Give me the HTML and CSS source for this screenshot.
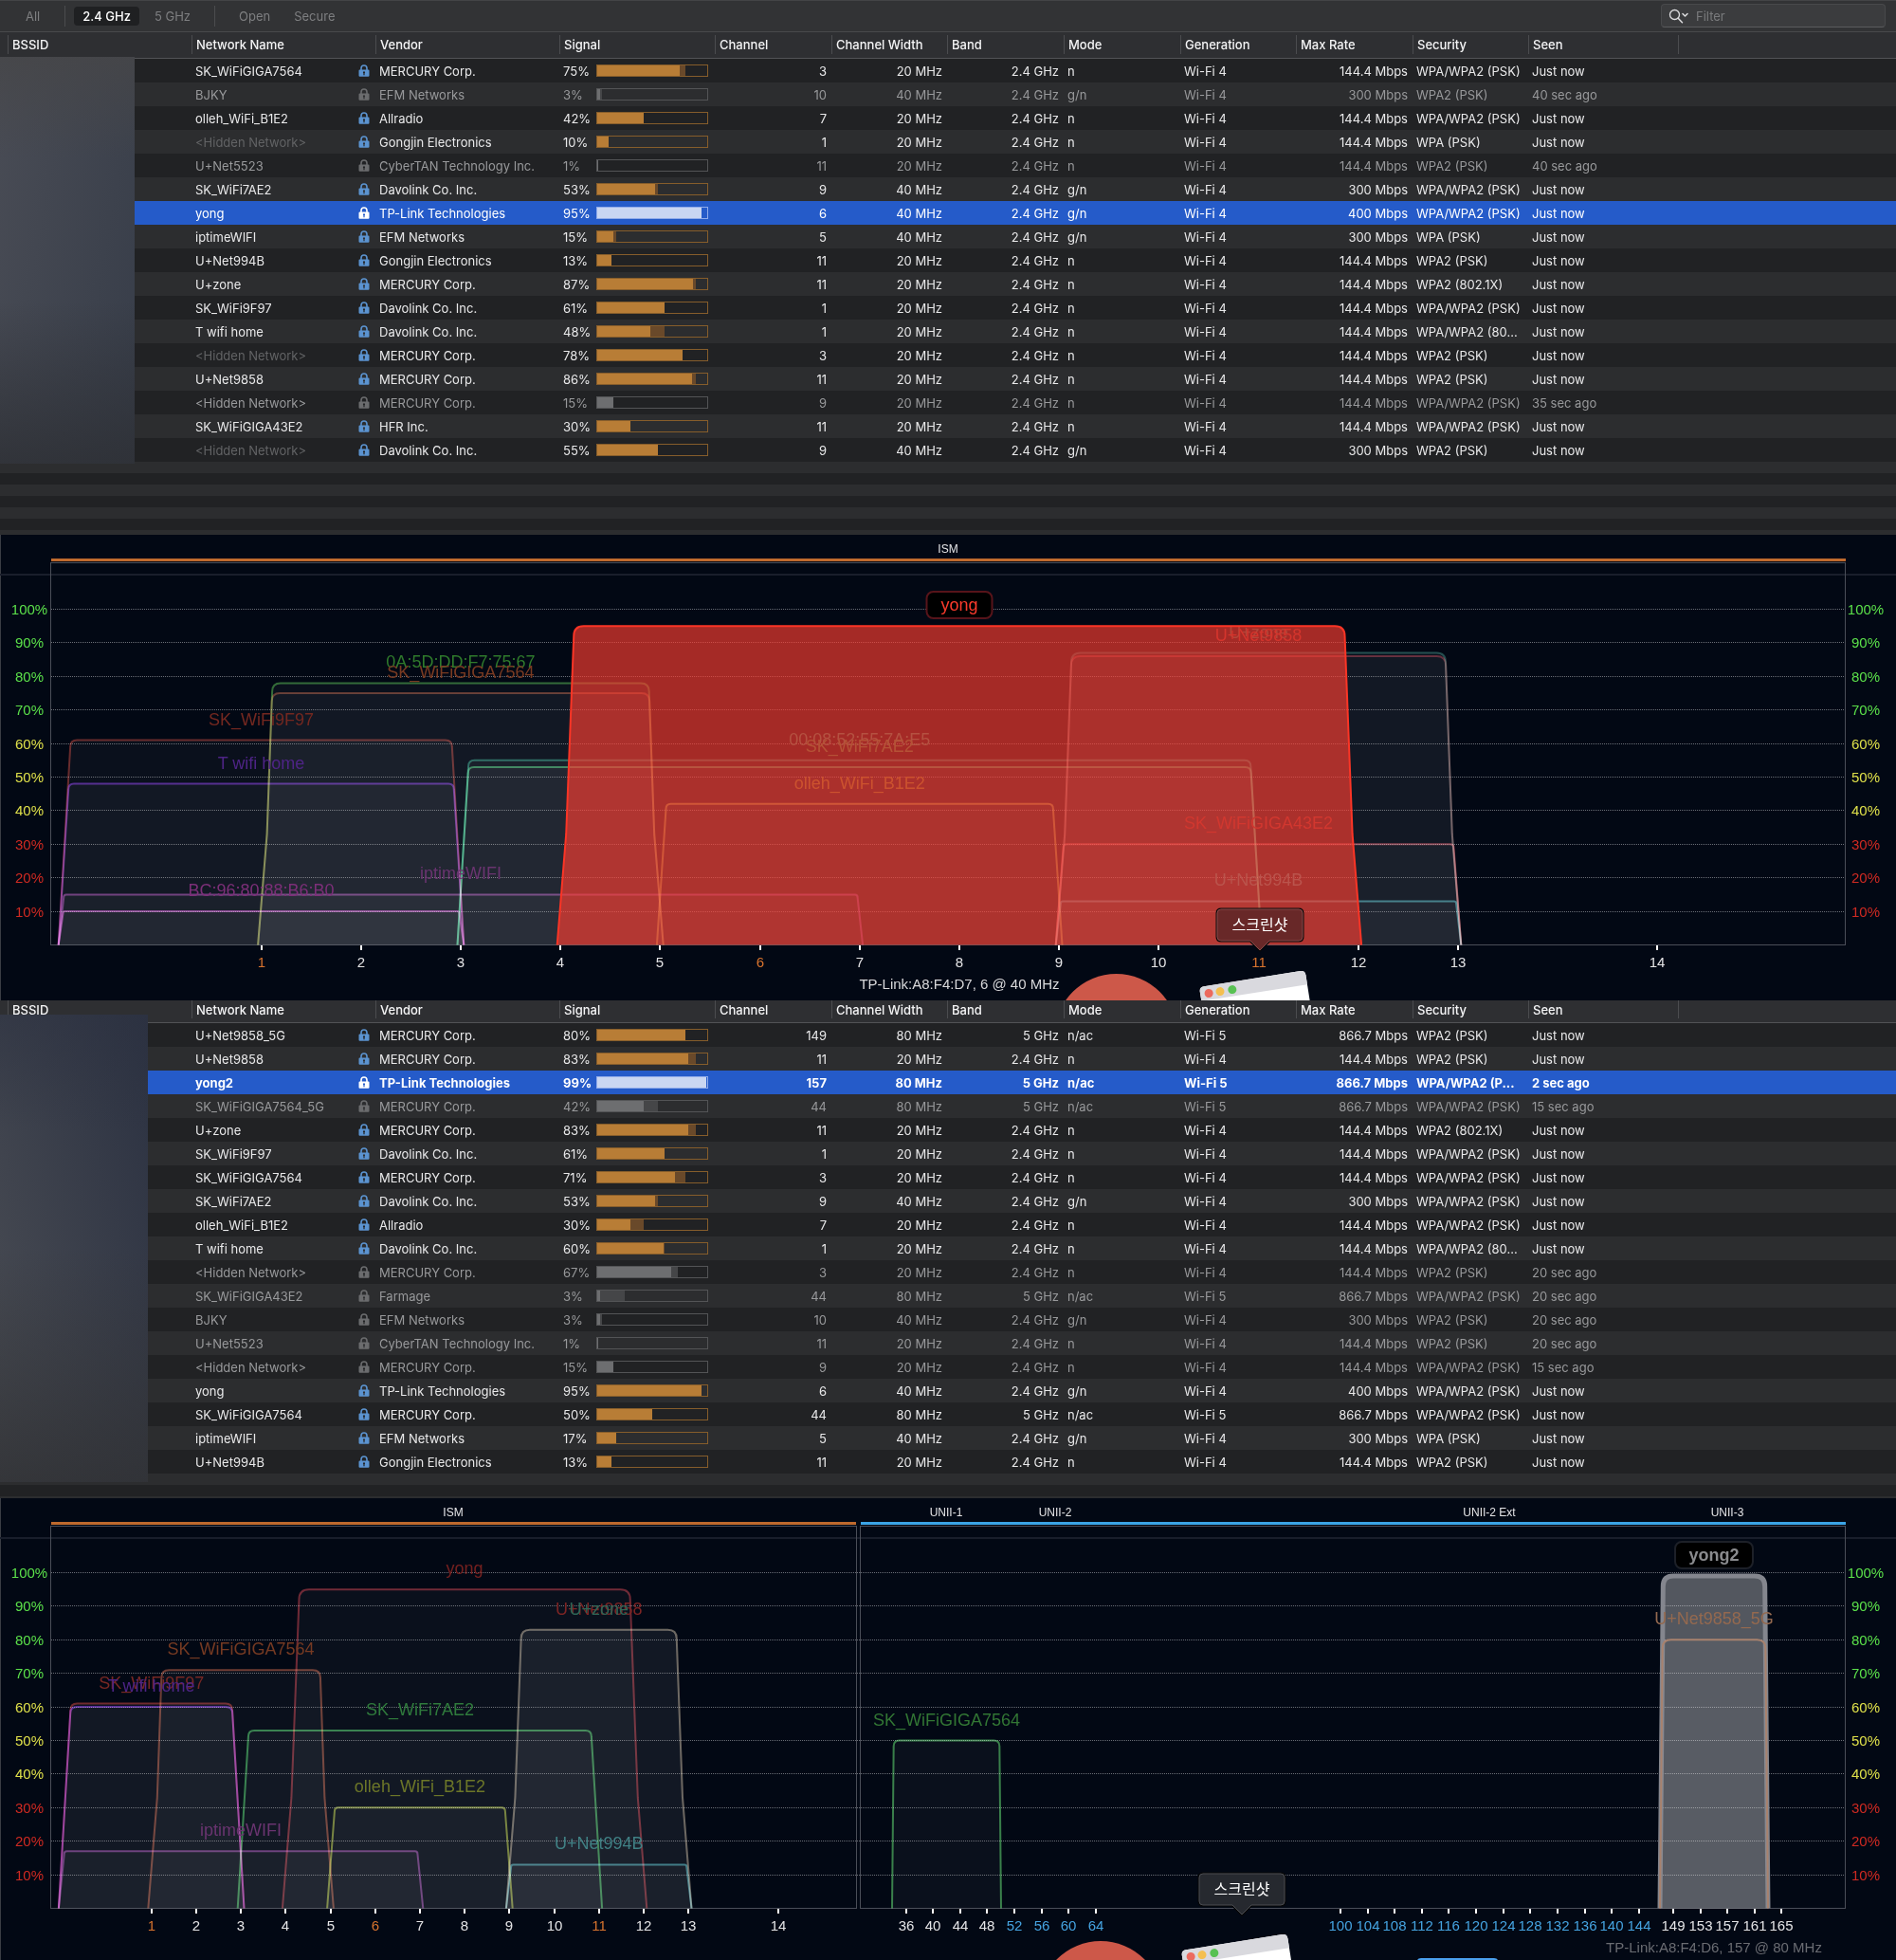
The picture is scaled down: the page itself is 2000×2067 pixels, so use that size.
FILE: index.html
```html
<!DOCTYPE html>
<html lang="en">
<head>
<meta charset="utf-8">
<title>Wi-Fi networks</title>
<link rel="stylesheet" href="styles.css">
</head>
<body>
<svg class="defs" aria-hidden="true">
  <symbol id="lock" viewBox="0 0 12 13">
    <path d="M3 6V4a3 3 0 0 1 6 0v2" fill="none" stroke="currentColor" stroke-width="1.6"/>
    <path fill="currentColor" fill-rule="evenodd" d="M1.5 5.6h9a1 1 0 0 1 1 1v5.2a1 1 0 0 1-1 1h-9a1 1 0 0 1-1-1V6.600a1 1 0 0 1 1-1zM6 7.200a1.100 1.100 0 0 0-.6 2v2h1.200v-2a1.100 1.100 0 0 0-.6-2z"/>
  </symbol>
</svg>

<header class="toolbar">
  <nav class="filters" aria-label="Network filters">
    <button type="button" class="filter">All</button>
    <span class="divider"></span>
    <button type="button" class="filter filter-on" aria-pressed="true">2.4 GHz</button>
    <button type="button" class="filter">5 GHz</button>
    <span class="divider divider-wide"></span>
    <button type="button" class="filter">Open</button>
    <button type="button" class="filter">Secure</button>
  </nav>
  <label class="search">
    <svg class="search-icon" viewBox="0 0 22 16" width="22" height="16" aria-hidden="true">
      <circle cx="6.500" cy="6.500" r="5" fill="none" stroke="#dcdcde" stroke-width="1.300"/>
      <path d="M10.200 10.200l4.300 4.500" stroke="#dcdcde" stroke-width="1.500" stroke-linecap="round"/>
      <path d="M15 5.500l2.500 2.500 2.500-2.500" fill="none" stroke="#dcdcde" stroke-width="1.500" stroke-linecap="round" stroke-linejoin="round"/>
    </svg>
    <input class="search-input" type="search" placeholder="Filter" aria-label="Filter">
  </label>
</header>

<main>
  <section class="list">
    <table class="networks" id="networks-a"></table>
    <div class="mask mask-a"></div>
    <div class="filler filler-a"></div>
  </section>
  <section class="spectrum">
    <svg class="chart" id="chart-a" viewBox="0 0 2000 491" role="img" aria-label="2.4 GHz channels"></svg>
  </section>
  <section class="list">
    <table class="networks networks-scrolled" id="networks-b"></table>
    <div class="mask mask-b"></div>
    <div class="filler filler-b"></div>
  </section>
  <section class="spectrum">
    <svg class="chart" id="chart-b" viewBox="0 0 2000 487" role="img" aria-label="2.4 GHz and 5 GHz channels"></svg>
  </section>
</main>
<script src="app.js"></script>
</body>
</html>
```
FILE: styles.css
```css
* { box-sizing: border-box; }

body {
  margin: 0;
  background: #020814;
  color: #e9e9ea;
  font-family: Inter, "Liberation Sans", "Noto Sans CJK KR", sans-serif;
  font-size: 13px;
  line-height: 18px;
}

.defs { display: none; }

/* toolbar */
.toolbar {
  display: flex;
  justify-content: space-between;
  align-items: center;
  height: 34px;
  padding: 0 11px 1px 18px;
  background: #323335;
  border-top: 1px solid #434446;
  border-bottom: 1px solid #48494b;
}
.filters { display: flex; align-items: center; gap: 7px; }
.filter {
  height: 20px;
  padding: 0 9px;
  border: 0;
  border-radius: 4px;
  background: none;
  color: #7e7f81;
  font: inherit;
}
.filter-on { background: #1f2022; color: #fff; font-weight: 500; }
.divider { width: 1px; height: 22px; margin: 0 2px 0 10px; background: #4b4c4e; }
.divider-wide { margin: 0 9px; }

.search {
  display: flex;
  align-items: center;
  gap: 7px;
  width: 237px;
  height: 25px;
  padding-left: 7px;
  border: 1px solid #48494b;
  border-bottom-color: #5a5b5d;
  border-radius: 4px;
  background: #3b3c3e;
}
.search-input {
  flex: 1;
  min-width: 0;
  padding: 0;
  border: 0;
  outline: 0;
  background: none;
  color: #e9e9ea;
  font: inherit;
}
.search-input::placeholder { color: #7a7b7d; }

/* network list */
.list { position: relative; overflow: hidden; }
.networks {
  width: 100%;
  table-layout: fixed;
  border-collapse: separate;
  border-spacing: 0;
}
.c-name, .c-vendor { width: 194px; }
.c-bssid { width: 202px; }
.c-signal { width: 164px; }
.c-mid { width: 123px; }
.c-slim { width: 122px; }
.c-seen { width: 158px; }

.networks th {
  padding: 3px 0 4px;
  background: #2e2f32;
  border-bottom: 1px solid #525356;
  color: #f4f4f5;
  font-weight: 500;
  text-align: left;
}
.networks-scrolled th { padding: 0 0 4px; }
.head {
  display: flex;
  align-items: center;
  height: 20px;
  padding-left: 4px;
  border-left: 1px solid #4b4c4f;
}
.networks-scrolled .head { height: 19px; }
.networks th:first-child .head { margin-left: 8px; }

.networks td {
  height: 25px;
  padding: 0 5px 0 4px;
  white-space: nowrap;
  overflow: hidden;
}
.networks tr { background: #212224; }
.networks tr:nth-child(even) { background: #2c2d2f; }
.networks .num { text-align: right; }

.networks .gone { color: #98999b; }
.networks tbody tr.picked { background: #255bc9; color: #fff; }
.strong { font-weight: 700; }
.anonymous { color: #626365; }
.gone .anonymous { color: inherit; }

.name { display: flex; align-items: center; justify-content: space-between; }
.lock { width: 12px; height: 13px; margin-right: 1px; color: #5b93d0; }
.gone .lock { color: #6b6c6e; }
.picked .lock { color: #fff; }

.signal { display: flex; align-items: center; }
.level { width: 35px; flex: none; }
.bar {
  display: flex;
  width: 118px;
  height: 13px;
  flex: none;
  border: 1px solid #865d2b;
}
.bar-now { background: #b87d36; }
.bar-peak { background: #69492a; }
.gone .bar { border-color: #535456; }
.gone .bar-now { background: #6d6e70; }
.gone .bar-peak { background: #454648; }
.picked .bar { border-color: #8fabea; }
.picked .bar-now { background: #c9d6f2; }

.filler {
  background: repeating-linear-gradient(#2c2d2f 0 12px, #212224 12px 24px);
}
.filler-a { height: 77px; }
.filler-b { height: 26px; }

/* blurred-out addresses */
.mask { position: absolute; left: 0; }
.mask-a {
  top: 26px;
  bottom: 75px;
  width: 142px;
  background:
    linear-gradient(to bottom, rgba(70, 70, 72, .8), rgba(70, 70, 72, 0) 25%, rgba(45, 47, 52, 0) 60%, rgba(45, 47, 52, .8)),
    linear-gradient(100deg, #494c55, #373d49);
}
.mask-b {
  top: 15px;
  bottom: 17px;
  width: 156px;
  background:
    linear-gradient(to bottom, rgba(44, 49, 64, .5), rgba(44, 49, 64, 0) 25%, rgba(47, 48, 51, 0) 50%, rgba(47, 48, 51, .8)),
    linear-gradient(75deg, #4a4d54, #2c3242);
}

/* spectrum */
.spectrum { background: #020814; }
.chart {
  display: block;
  width: 100%;
  font-family: "Liberation Sans", "Noto Sans CJK KR", sans-serif;
  overflow: hidden;
}
.chart text { text-anchor: middle; }
.frame { fill: none; stroke: #4a4e58; }
.edge { stroke: #3a3d44; }
.rule { stroke: #191e2b; }
.grid { stroke: #6a6e76; stroke-dasharray: 1 1; }
.tick { stroke: #fff; stroke-width: 2; }
.band { font-size: 12px; fill: #e4e4e6; }
.axis { font-size: 15px; fill: #e4e4e6; }
.hi { fill: #5be04a; }
.mid { fill: #dfe04a; }
.low { fill: #d02a22; }
.main { fill: #d8742e; }
.dfs { fill: #45a3e0; }
.ism { fill: #bf6a2e; }
.unii { fill: #3ba4e6; }
.ssid { font-size: 18px; }
.net { stroke-width: 2; mix-blend-mode: screen; }
.area { fill: #fff; fill-opacity: .035; }
.caption { font-size: 15px; fill: #d8d8da; }
.caption-dim { fill: #6a6c72; }
.tip { font-size: 16px; fill: #fff; }
.heavy { font-weight: 700; }
```
FILE: app.js
```js
const COLUMNS = [
  ['BSSID', 'c-bssid'], ['Network Name', 'c-name'], ['Vendor', 'c-vendor'], ['Signal', 'c-signal'],
  ['Channel', 'c-mid'], ['Channel Width', 'c-slim'], ['Band', 'c-mid'], ['Mode', 'c-mid'],
  ['Generation', 'c-slim'], ['Max Rate', 'c-mid'], ['Security', 'c-slim'], ['Seen', 'c-seen'], ['', '']
];

// name | vendor | signal | peak | channel | width | mode | rate | security | seen | state
const LIST_A = `
SK_WiFiGIGA7564|MERCURY Corp.|75|80|3|20|n|144.4|WPA/WPA2 (PSK)|Just now
BJKY|EFM Networks|3|4|10|40|g/n|300|WPA2 (PSK)|40 sec ago|gone
olleh_WiFi_B1E2|Allradio|42|42|7|20|n|144.4|WPA/WPA2 (PSK)|Just now
<Hidden Network>|Gongjin Electronics|10|10|1|20|n|144.4|WPA (PSK)|Just now
U+Net5523|CyberTAN Technology Inc.|1|1|11|20|n|144.4|WPA2 (PSK)|40 sec ago|gone
SK_WiFi7AE2|Davolink Co. Inc.|53|55|9|40|g/n|300|WPA/WPA2 (PSK)|Just now
yong|TP-Link Technologies|95|95|6|40|g/n|400|WPA/WPA2 (PSK)|Just now|picked
iptimeWIFI|EFM Networks|15|17|5|40|g/n|300|WPA (PSK)|Just now
U+Net994B|Gongjin Electronics|13|13|11|20|n|144.4|WPA2 (PSK)|Just now
U+zone|MERCURY Corp.|87|90|11|20|n|144.4|WPA2 (802.1X)|Just now
SK_WiFi9F97|Davolink Co. Inc.|61|61|1|20|n|144.4|WPA/WPA2 (PSK)|Just now
T wifi home|Davolink Co. Inc.|48|61|1|20|n|144.4|WPA/WPA2 (80...|Just now
<Hidden Network>|MERCURY Corp.|78|78|3|20|n|144.4|WPA2 (PSK)|Just now
U+Net9858|MERCURY Corp.|86|90|11|20|n|144.4|WPA2 (PSK)|Just now
<Hidden Network>|MERCURY Corp.|15|15|9|20|n|144.4|WPA/WPA2 (PSK)|35 sec ago|gone
SK_WiFiGIGA43E2|HFR Inc.|30|30|11|20|n|144.4|WPA/WPA2 (PSK)|Just now
<Hidden Network>|Davolink Co. Inc.|55|55|9|40|g/n|300|WPA2 (PSK)|Just now`;

const LIST_B = `
U+Net9858_5G|MERCURY Corp.|80|80|149|80|n/ac|866.7|WPA2 (PSK)|Just now
U+Net9858|MERCURY Corp.|83|90|11|20|n|144.4|WPA2 (PSK)|Just now
yong2|TP-Link Technologies|99|99|157|80|n/ac|866.7|WPA/WPA2 (P...|2 sec ago|picked strong
SK_WiFiGIGA7564_5G|MERCURY Corp.|42|55|44|80|n/ac|866.7|WPA/WPA2 (PSK)|15 sec ago|gone
U+zone|MERCURY Corp.|83|90|11|20|n|144.4|WPA2 (802.1X)|Just now
SK_WiFi9F97|Davolink Co. Inc.|61|61|1|20|n|144.4|WPA/WPA2 (PSK)|Just now
SK_WiFiGIGA7564|MERCURY Corp.|71|80|3|20|n|144.4|WPA/WPA2 (PSK)|Just now
SK_WiFi7AE2|Davolink Co. Inc.|53|55|9|40|g/n|300|WPA/WPA2 (PSK)|Just now
olleh_WiFi_B1E2|Allradio|30|42|7|20|n|144.4|WPA/WPA2 (PSK)|Just now
T wifi home|Davolink Co. Inc.|60|61|1|20|n|144.4|WPA/WPA2 (80...|Just now
<Hidden Network>|MERCURY Corp.|67|73|3|20|n|144.4|WPA2 (PSK)|20 sec ago|gone
SK_WiFiGIGA43E2|Farmage|3|25|44|80|n/ac|866.7|WPA/WPA2 (PSK)|20 sec ago|gone
BJKY|EFM Networks|3|4|10|40|g/n|300|WPA2 (PSK)|20 sec ago|gone
U+Net5523|CyberTAN Technology Inc.|1|1|11|20|n|144.4|WPA2 (PSK)|20 sec ago|gone
<Hidden Network>|MERCURY Corp.|15|15|9|20|n|144.4|WPA/WPA2 (PSK)|15 sec ago|gone
yong|TP-Link Technologies|95|95|6|40|g/n|400|WPA/WPA2 (PSK)|Just now
SK_WiFiGIGA7564|MERCURY Corp.|50|50|44|80|n/ac|866.7|WPA/WPA2 (PSK)|Just now
iptimeWIFI|EFM Networks|17|17|5|40|g/n|300|WPA (PSK)|Just now
U+Net994B|Gongjin Electronics|13|13|11|20|n|144.4|WPA2 (PSK)|Just now`;

const esc = s => s.replace(/</g, '&lt;').replace(/>/g, '&gt;');

function row(line) {
  const [name, vendor, now, peak, channel, width, mode, rate, security, seen, state = ''] = line.split('|');
  const five = mode === 'n/ac';
  const hidden = name[0] === '<' ? ' class="anonymous"' : '';
  return `<tr class="${state}"><td></td>
    <td><div class="name"><span${hidden}>${esc(name)}</span><svg class="lock" aria-label="Secured"><use href="#lock"/></svg></div></td>
    <td>${vendor}</td>
    <td><div class="signal"><span class="level">${now}%</span><div class="bar"><div class="bar-now" style="width:${now}%"></div><div class="bar-peak" style="width:${peak - now}%"></div></div></div></td>
    <td class="num">${channel}</td><td class="num">${width} MHz</td><td class="num">${five ? '5' : '2.4'} GHz</td>
    <td>${mode}</td><td>Wi-Fi ${five ? 5 : 4}</td><td class="num">${rate} Mbps</td>
    <td>${security}</td><td>${seen}</td><td></td></tr>`;
}

function fillTable(id, list) {
  document.getElementById(id).innerHTML =
    `<colgroup>${COLUMNS.map(c => `<col class="${c[1]}">`).join('')}</colgroup>
     <thead><tr>${COLUMNS.map(c => `<th scope="col"><div class="head">${c[0]}</div></th>`).join('')}</tr></thead>
     <tbody>${list.trim().split('\n').map(row).join('')}</tbody>`;
}

const BASE = 432.5;
const UNIT = 3.54;
const text = (x, y, cls, s, fill) => `<text x="${x}" y="${y}" class="${cls}"${fill ? ` fill="${fill}"` : ''}>${s}</text>`;

// outline of one transmission: steep flanks with a knee, rounded shoulders
function outline(cx, half, level, steep) {
  const top = BASE - UNIT * level;
  const dx = steep ? level / 30 : 3.3 + .15 * level;
  const r = level / 10 + 1;
  const l = cx - half, e = cx + half;
  const knee = !steep && level > 65 ? BASE - UNIT * 33 : 0;
  return `M${l} ${BASE}` + (knee ? `L${l + 9.5} ${knee}` : '') +
    `L${l + dx} ${top + r}Q${l + dx} ${top} ${l + dx + r} ${top}H${e - dx - r}` +
    `Q${e - dx} ${top} ${e - dx} ${top + r}` + (knee ? `L${e - 9.5} ${knee}` : '') + `L${e} ${BASE}`;
}

function net(n) {
  const d = outline(n.x, n.half, n.level, n.steep);
  return `<path class="area" d="${d}"/><path class="net" d="${d}" fill="none" stroke="${n.line}"/>` +
    text(n.x, BASE - UNIT * n.level - 16, 'ssid', n.name, n.label);
}

function scaffold() {
  let s = '<line class="edge" x1=".5" x2=".5" y1="0" y2="491"/><line class="rule" x1="0" x2="2000" y1="42" y2="42" stroke-width="2"/>';
  for (let p = 10; p <= 100; p += 10) {
    const y = Math.floor(BASE - UNIT * p) + .5;
    const cls = 'axis ' + (p > 60 ? 'hi' : p > 30 ? 'mid' : 'low');
    s += `<line class="grid" x1="54" x2="1946" y1="${y}" y2="${y}"/>` + text(31, y + 5, cls, p + '%') + text(1968, y + 5, cls, p + '%');
  }
  return s;
}

const tick = (x, label, cls = '') =>
  `<line class="tick" x1="${x}" x2="${x}" y1="433" y2="438"/>` + text(x, 456, 'axis ' + cls, label);

function ismTicks(pos) {
  let s = '';
  for (let c = 1; c <= 14; c++) s += tick(Math.round(pos(c)), c, c % 5 === 1 ? 'main' : '');
  return s;
}

function badge(x, y, w, stroke, fill, cls, name) {
  return `<rect x="${x - w / 2}" y="${y}" width="${w}" height="28" rx="7" fill="#000" stroke="${stroke}" stroke-width="2"/>` +
    text(x, y + 20, cls, name, fill);
}

function tooltip(x, y, fill, edge) {
  return `<path d="M${x - 41} ${y}h82q4 0 4 4v25q0 4-4 4h-31l-10 10-10-10h-31q-4 0-4-4v-25q0-4 4-4z" fill="${fill}" stroke="#080808" stroke-width="3"/>
    <path d="M${x - 41} ${y}h82q4 0 4 4v25q0 4-4 4h-31l-10 10-10-10h-31q-4 0-4-4v-25q0-4 4-4z" fill="${fill}" stroke="${edge}"/>` +
    text(x, y + 22, 'tip', '스크린샷');
}

function dock(cx, cy, wx, wy) {
  return `<circle cx="${cx}" cy="${cy}" r="65" fill="#cd5849"/>
    <g transform="translate(${wx} ${wy}) rotate(-9)">
      <path d="M0 60V5q0-5 5-5h103q5 0 5 5v55z" fill="#fff"/>
      <path d="M0 15V5q0-5 5-5h103q5 0 5 5v10z" fill="#d9d9de"/>
      <circle cx="9" cy="8" r="4.500" fill="#ec6a5e"/><circle cx="21" cy="8" r="4.500" fill="#f4bf4f"/><circle cx="34" cy="8" r="4.500" fill="#58c152"/>
    </g>`;
}

function chartA() {
  const pos = c => c === 14 ? 1748 : 275.5 + 105.2 * (c - 1);
  const n = (name, ch, level, line, label, wide) =>
    net({ name, x: pos(ch), level, line, label, half: (wide ? 4 : 2) * 105.2 + 3.4 });
  const yong = outline(pos(8), 4 * 105.2 + 3.4, 95);
  return scaffold() +
    '<rect class="ism" x="54" y="25" width="1893" height="3"/>' + text(1000, 19, 'band', 'ISM') +
    '<rect class="frame" x="53.500" y="29.500" width="1893" height="403"/>' +
    n('U+zone', 11, 87, '#20463e', '#2a5c4c') + n('U+Net9858', 11, 86, '#5c1e22', '#8c2424') +
    n('0A:5D:DD:F7:75:67', 3, 78, '#2f6424', '#2f7a2c') + n('SK_WiFiGIGA7564', 3, 75, '#5e2e1a', '#7a3b22') +
    n('SK_WiFi9F97', 1, 61, '#642218', '#742820') + n('00:08:52:55:7A:E5', 7, 55, '#1e5c4a', '#2f7a60', 1) +
    n('SK_WiFi7AE2', 7, 53, '#2a7440', '#2f7d40', 1) + n('T wifi home', 1, 48, '#4c1e80', '#4e2486') +
    n('olleh_WiFi_B1E2', 7, 42, '#747a26', '#747c2a') + n('SK_WiFiGIGA43E2', 11, 30, '#7a2c30', '#842c2c') +
    n('iptimeWIFI', 3, 15, '#642c68', '#6a3470', 1) + n('U+Net994B', 11, 13, '#2f6c70', '#3f8080') +
    n('BC:96:80:88:B6:B0', 1, 10, '#7c2f7c', '#7c2f78') +
    `<path d="${yong}" fill="#fa3c30" fill-opacity=".66" stroke="#fb3526" stroke-width="2"/>` +
    badge(1012, 60, 69, '#57141a', '#fb3b2c', 'ssid', 'yong') +
    ismTicks(pos) + tooltip(1329, 395, '#682828', '#8a4a4a') +
    text(1012, 479, 'caption', 'TP-Link:A8:F4:D7, 6 @ 40 MHz') + dock(1177.5, 528, 1265, 477);
}

function chartB() {
  const pos = c => c === 14 ? 820.5 : 159.7 + 47.2 * (c - 1);
  const n = (name, ch, level, line, label, wide) =>
    net({ name, x: pos(ch), level, line, label, half: (wide ? 4 : 2) * 47.2 + 3.4 });
  const yong2 = outline(1808, 57, 99, true);
  let ticks = ismTicks(pos);
  for (let i = 0; i < 8; i++) ticks += tick(Math.round(955.5 + 28.65 * i), 36 + 4 * i, i > 3 ? 'dfs' : '');
  for (let i = 0; i < 12; i++) ticks += tick(Math.round(1414 + 28.62 * i), 100 + 4 * i, 'dfs');
  for (let i = 0; i < 5; i++) ticks += tick(Math.round(1765 + 28.6 * i), 149 + 4 * i);
  return scaffold() +
    '<rect class="ism" x="54" y="25" width="849" height="3"/><rect class="unii" x="908" y="25" width="1039" height="3"/>' +
    text(478, 19, 'band', 'ISM') + text(998, 19, 'band', 'UNII-1') + text(1113, 19, 'band', 'UNII-2') +
    text(1571, 19, 'band', 'UNII-2 Ext') + text(1822, 19, 'band', 'UNII-3') +
    '<rect class="frame" x="53.500" y="29.500" width="850" height="403"/><rect class="frame" x="907.500" y="29.500" width="1039" height="403"/>' +
    n('yong', 8, 95, '#6c2022', '#74201f', 1) +
    n('U+Net9858', 11, 83, '#50241c', '#7c2424') + n('U+zone', 11, 83, '#22443a', '#2f6656') +
    n('SK_WiFiGIGA7564', 3, 71, '#6c3420', '#763a22') + n('SK_WiFi9F97', 1, 61, '#6c2018', '#782824') +
    n('T wifi home', 1, 60, '#501e88', '#4e2486') + n('SK_WiFi7AE2', 7, 53, '#2f7838', '#2f7a3c', 1) +
    n('olleh_WiFi_B1E2', 7, 30, '#6c7620', '#6c7628') + n('iptimeWIFI', 3, 17, '#602c66', '#6a3470', 1) +
    n('U+Net994B', 11, 13, '#306c70', '#408084') +
    net({ name: 'SK_WiFiGIGA7564', x: 998.5, half: 57.5, level: 50, steep: true, line: '#357a38', label: '#327634' }) +
    `<path d="${yong2}" fill="#fff" fill-opacity=".32" stroke="#84868e" stroke-width="5"/>` +
    `<path d="${outline(1808, 57, 80, true)}" fill="#fff" fill-opacity=".03" stroke="#a8826e" stroke-width="2"/>` +
    text(1808, 133, 'ssid', 'U+Net9858_5G', '#94694f') +
    badge(1808, 46, 82, '#1d2028', '#8a8b8e', 'ssid heavy', 'yong2') +
    ticks + tooltip(1310, 396, '#26292f', '#4a4c52') +
    text(1808, 479, 'caption caption-dim', 'TP-Link:A8:F4:D6, 157 @ 80 MHz') + dock(1161, 532, 1246, 477) +
    '<path d="M1495 487q1-2 4-2h77q3 0 4 2z" fill="#4aa0ee"/>';
}

fillTable('networks-a', LIST_A);
fillTable('networks-b', LIST_B);
document.getElementById('chart-a').innerHTML = chartA();
document.getElementById('chart-b').innerHTML = chartB();
```
